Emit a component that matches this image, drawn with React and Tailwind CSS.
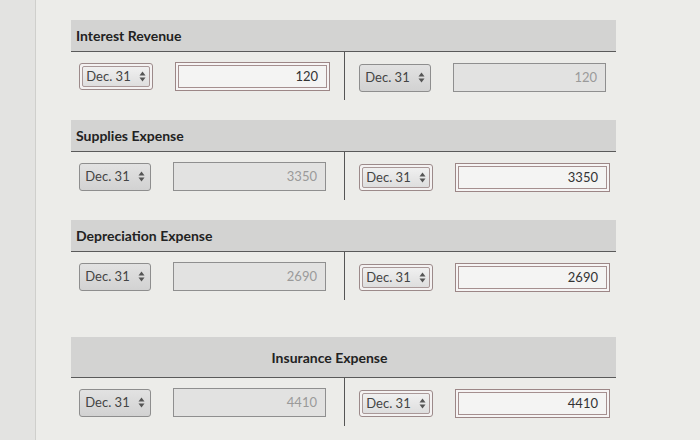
import React from "react";

const sections = [
  { title: "Interest Revenue", left: { active: true, value: "120" }, right: { active: false, value: "120" } },
  { title: "Supplies Expense", left: { active: false, value: "3350" }, right: { active: true, value: "3350" } },
  { title: "Depreciation Expense", left: { active: false, value: "2690" }, right: { active: true, value: "2690" } },
];

function Arrows() {
  return (
    <svg width="7" height="11" viewBox="0 0 7 11" className="ml-2">
      <path d="M3.5 0.5 L6.5 4.5 L0.5 4.5 Z" fill="#555" />
      <path d="M3.5 10.5 L6.5 6.5 L0.5 6.5 Z" fill="#555" />
    </svg>
  );
}

function DateSelect({ active }) {
  if (active) {
    return (
      <div className="w-[74px] h-[27px] rounded-[3px] border border-[#9c8a8a] p-[2px] bg-[#f4f2f2]">
        <div className="h-full rounded-[2px] border border-[#a99898] bg-gradient-to-b from-[#f0f0f0] to-[#dedede] flex items-center justify-center text-[13px] text-[#444]">
          Dec. 31 <Arrows />
        </div>
      </div>
    );
  }
  return (
    <div className="w-[72px] h-[28px] rounded-[3px] border border-[#8e8e8e] bg-gradient-to-b from-[#e2e2e2] to-[#d2d2d2] flex items-center justify-center text-[13px] text-[#444]">
      Dec. 31 <Arrows />
    </div>
  );
}

function Amount({ active, value }) {
  if (active) {
    return (
      <div className="w-[155px] h-[29px] border border-[#9c8686] p-[2px] bg-[#f6f4f4]">
        <div className="h-full border border-[#a58f8f] bg-[#f4f4f3] flex items-center justify-end pr-2 text-[13px] text-[#333]">
          {value}
        </div>
      </div>
    );
  }
  return (
    <div className="w-[153px] h-[29px] border border-[#8f8f8f] bg-[#e2e2e1] flex items-center justify-end pr-2 text-[13px] text-[#9a9a9a]">
      {value}
    </div>
  );
}

function Side({ side, leftCol }) {
  return (
    <div className={leftCol ? "w-[274px] flex items-center pl-[8px] pt-[10px] pb-[9px] border-r border-[#555]" : "flex-1 flex items-center pl-[14px] pt-[11px] pb-[8px]"}>
      <DateSelect active={side.active} />
      <div className="ml-[22px]">
        <Amount active={side.active} value={side.value} />
      </div>
    </div>
  );
}

function Section({ s, centered }) {
  return (
    <div>
      <div
        className={
          centered
            ? "h-[41px] bg-[#d3d3d2] border-b border-[#5a5a5a] flex items-end justify-center pb-[9px] pr-[28px] text-[14px] font-bold text-[#222]"
            : "h-[32px] bg-[#d3d3d2] border-b border-[#5a5a5a] flex items-center px-[5px] text-[14px] font-bold text-[#222]"
        }
      >
        {s.title}
      </div>
      <div className="flex">
        <Side side={s.left} leftCol />
        <Side side={s.right} />
      </div>
    </div>
  );
}

export default function App() {
  return (
    <div className="w-[700px] h-[440px] bg-[#ecece9] flex" style={{ fontFamily: "Lato, 'Liberation Sans', sans-serif" }}>
      <div className="w-[36px] h-full bg-[#e3e3e1] border-r border-[#cfcfcc]" />
      <div className="w-[545px] ml-[35px] pt-[20px] flex flex-col">
        <div className="flex flex-col gap-[20px]">
          {sections.map((s) => (
            <Section key={s.title} s={s} />
          ))}
        </div>
        <div className="mt-[37px]">
          <Section
            s={{ title: "Insurance Expense", left: { active: false, value: "4410" }, right: { active: true, value: "4410" } }}
            centered
          />
        </div>
      </div>
    </div>
  );
}
